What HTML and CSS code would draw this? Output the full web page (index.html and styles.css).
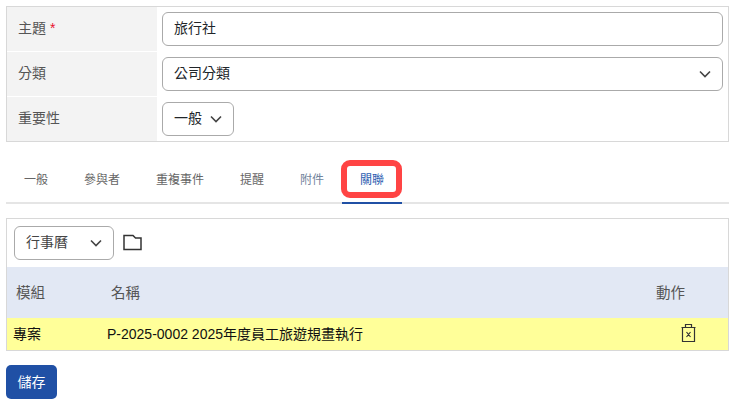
FILE: index.html
```html
<!DOCTYPE html>
<html lang="zh-Hant">
<head>
<meta charset="utf-8">
<title>關聯</title>
<link rel="stylesheet" href="styles.css">
</head>
<body>
<div class="form">
  <div class="form-row">
    <div class="label"><span class="nudge">主題 <span class="req">*</span></span></div>
    <div class="value"><div class="control full"><span class="nudge">旅行社</span></div></div>
  </div>
  <div class="form-row">
    <div class="label"><span class="nudge">分類</span></div>
    <div class="value"><div class="control full select"><span class="nudge">公司分類</span>
      <svg class="chev" viewBox="0 0 12 8"><path d="M1 1.5l5 5 5-5"/></svg></div></div>
  </div>
  <div class="form-row">
    <div class="label"><span class="nudge">重要性</span></div>
    <div class="value"><div class="control small select"><span class="nudge">一般</span>
      <svg class="chev" viewBox="0 0 12 8"><path d="M1 1.5l5 5 5-5"/></svg></div></div>
  </div>
</div>

<nav class="tabs">
  <div class="tab">一般</div>
  <div class="tab">參與者</div>
  <div class="tab">重複事件</div>
  <div class="tab">提醒</div>
  <div class="tab faded">附件</div>
  <div class="tab active">關聯<span class="highlight"></span></div>
</nav>

<section class="panel">
  <div class="toolbar">
    <div class="control picker select"><span class="nudge">行事曆</span>
      <svg class="chev" viewBox="0 0 12 8"><path d="M1 1.5l5 5 5-5"/></svg></div>
    <svg class="folder" viewBox="0 0 19 17"><path d="M1 15.500V1.500h9l2.500 2.500h5.500v11.500z"/></svg>
  </div>
  <div class="thead">
    <div class="c1">模組</div>
    <div class="c2">名稱</div>
    <div class="c3">動作</div>
  </div>
  <div class="trow">
    <div class="c1">專案</div>
    <div class="c2">P-2025-0002 2025年度員工旅遊規畫執行</div>
    <div class="c3">
      <svg class="trash" viewBox="0 0 15 19"><path d="M1.500 4.500v14h12v-14zM.5 4.500h14M4.500 4V1.500h6V4M5.500 9l4 5M9.500 9l-4 5"/></svg>
    </div>
  </div>
</section>

<button class="save" type="button">儲存</button>
</body>
</html>
```

FILE: styles.css
```css
* { box-sizing: border-box; }
html, body { margin: 0; background: #fff; }
body {
  padding: 6px;
  width: 735px;
  font-family: "Liberation Sans", "Noto Sans CJK TC", sans-serif;
  font-size: 14px;
  color: #212529;
}
.nudge {
  display: block;
  line-height: 20px;
  margin-bottom: 3px;
}
.form {
  border: 1px solid #d8d8d8;
  display: flex;
  flex-direction: column;
  height: 136px;
}
.form-row {
  display: flex;
  flex: 1;
  border-bottom: 1px solid #fff;
}
.form-row:last-child { border-bottom: 0; }
.label {
  width: 150px;
  background: #f3f3f3;
  padding-left: 11px;
  display: flex;
  align-items: center;
  color: #555;
}
.req { color: #e8112d; }
.value {
  flex: 1;
  padding: 0 5px;
  display: flex;
  align-items: center;
}
.control {
  height: 33.500px;
  border: 1px solid #aaa;
  border-radius: 6px;
  padding: 0 11px;
  display: flex;
  align-items: center;
  justify-content: space-between;
  background: #fff;
  color: #212529;
}
.full { width: 561px; }
.small { width: 72px; }
.picker { width: 100px; color: #444; }
.chev {
  width: 12px;
  height: 8px;
  fill: none;
  stroke: #444;
  stroke-width: 1.600;
}
.tabs {
  display: flex;
  margin-top: 18px;
  height: 44px;
  border-bottom: 2px solid #e5e5e5;
}
.tab {
  position: relative;
  padding: 0 18px;
  height: 44px;
  font-size: 12px;
  line-height: 41px;
  color: #666;
  border-bottom: 2px solid transparent;
}
.faded { color: #72849c; }
.active { color: #2a5cb0; border-bottom-color: #2050a5; }
.highlight {
  position: absolute;
  left: -1px;
  right: 0;
  top: 0;
  height: 38px;
  border: 6px solid #ff4444;
  border-radius: 9px;
}
.panel {
  margin-top: 14px;
  border: 1px solid #d8d8d8;
}
.toolbar {
  display: flex;
  align-items: center;
  gap: 9px;
  height: 48px;
  padding: 0 7px;
}
.folder {
  width: 19px;
  height: 17px;
  margin-bottom: 2px;
  fill: none;
  stroke: #333;
  stroke-width: 1.500;
}
.thead, .trow { display: flex; align-items: center; }
.thead {
  height: 51px;
  padding-bottom: 2px;
  background: #e2e8f4;
  color: #555;
  font-size: 14.500px;
}
.thead .c1 { width: 104px; padding-left: 9px; }
.thead .c2 { flex: 1; }
.thead .c3 { width: 72px; }
.trow {
  height: 32px;
  padding-bottom: 3px;
  background: #ffff99;
  color: #111;
}
.trow .c1 { width: 100px; padding-left: 6px; }
.trow .c2 { flex: 1; }
.trow .c3 {
  width: 80px;
  display: flex;
  justify-content: center;
}
.trash {
  width: 15px;
  height: 19px;
  fill: none;
  stroke: #333;
  stroke-width: 1.200;
}
.save {
  display: block;
  margin-top: 14px;
  width: 51px;
  height: 34px;
  padding: 0 0 2px;
  background: #2050a5;
  color: #fff;
  border: 0;
  border-radius: 5px;
  font: inherit;
}
```
